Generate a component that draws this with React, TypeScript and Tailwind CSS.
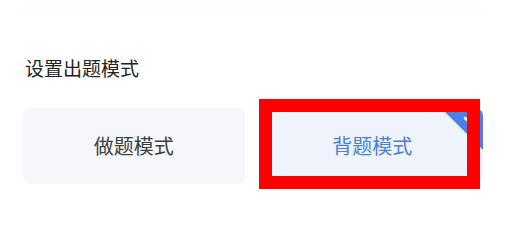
const cjk = { fontFamily: '"Noto Sans CJK SC", "Noto Sans", sans-serif' };

const ModeCard = ({ label, active }: { label: string; active?: boolean }) => (
  <div
    className={`relative flex-1 h-[76px] rounded-lg flex items-center justify-center ${
      active ? 'bg-[#eef3fc]' : 'bg-[#f5f7fa]'
    }`}
  >
    <div className="absolute inset-0 rounded-lg overflow-hidden">
      {active && (
        <svg className="absolute top-0 right-0" width="42" height="42" viewBox="0 0 42 42">
          <polygon points="0,0 42,0 42,42" fill="#4a80e8" />
          <path d="M24 10 L29 15 L37 6" stroke="#fff" strokeWidth="2.5" fill="none" strokeLinecap="round" />
        </svg>
      )}
    </div>
    <span className={`relative text-[20px] ${active ? 'text-[#4b7fd3]' : 'text-[#404040]'}`}>{label}</span>
    {active && (
      <div className="absolute left-[-3px] top-[-9px] right-[3px] bottom-[-5px] border-[13px] border-[#ff0000]" />
    )}
  </div>
);

export default function App() {
  return (
    <div className="w-[505px] h-[233px] bg-white overflow-hidden" style={cjk}>
      <div className="mx-[20px] mt-[7px] h-[7px] bg-[#fdfdfd]" />
      <div className="px-[25px] mt-[41px] text-[19px] leading-[26px] text-[#222]">设置出题模式</div>
      <div className="flex gap-[17px] px-[23px] mt-[27px] pr-[22px]">
        <ModeCard label="做题模式" />
        <ModeCard label="背题模式" active />
      </div>
    </div>
  );
}
